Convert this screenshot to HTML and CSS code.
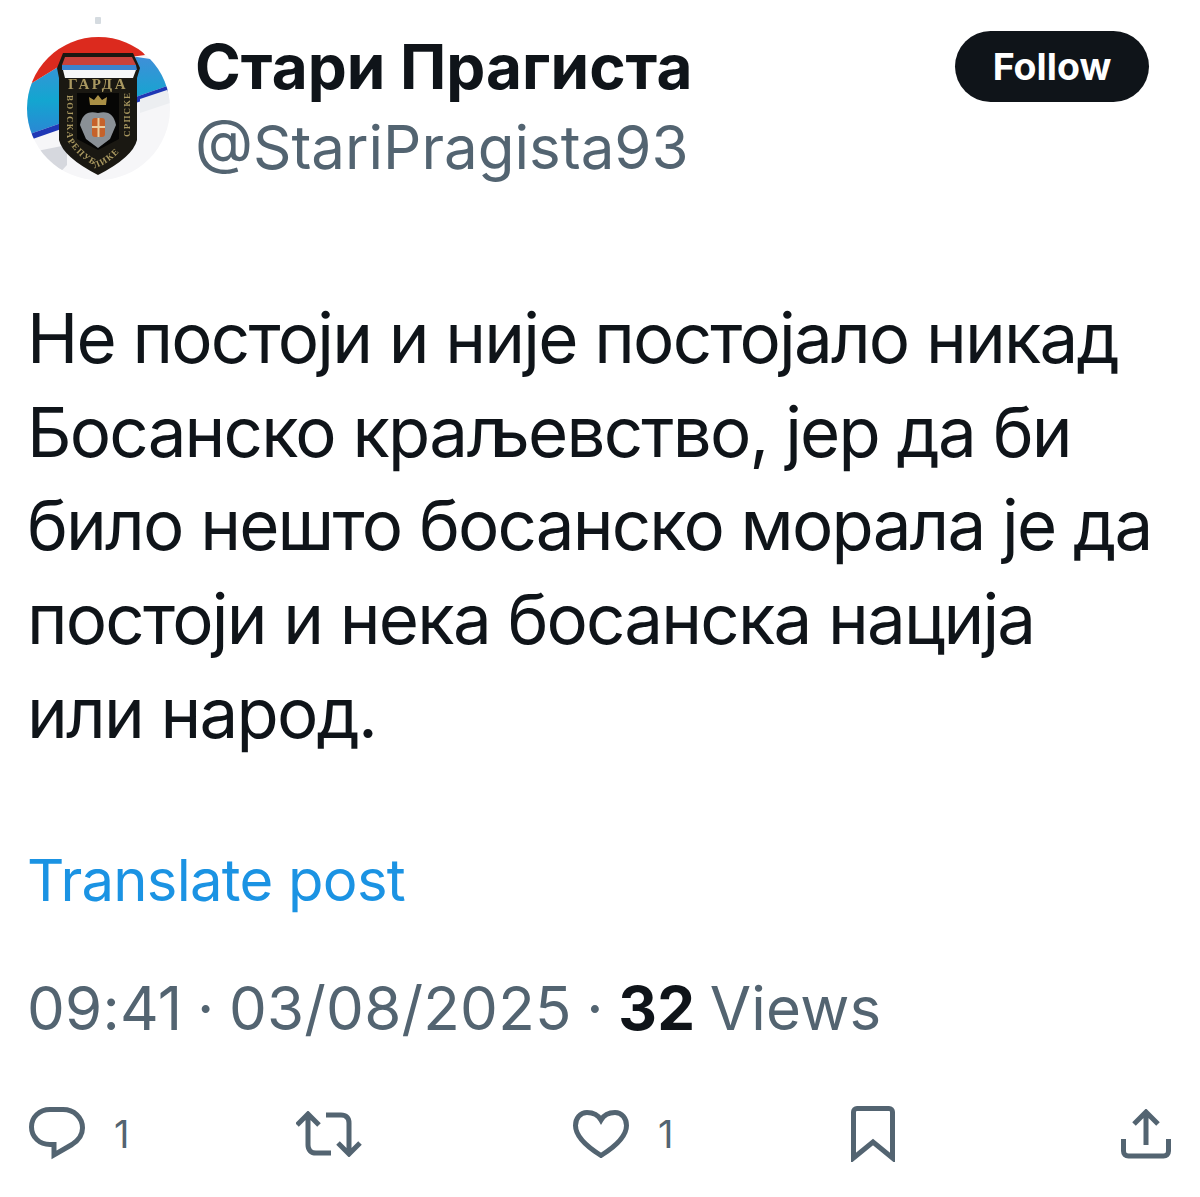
FILE: index.html
```html
<!DOCTYPE html>
<html lang="sr">
<head>
<meta charset="utf-8">
<title>Стари Прагиста</title>
<link rel="stylesheet" href="styles.css">
</head>
<body>
<main class="post">
  <span class="speck"></span>
  <header class="head">
    <svg class="avatar" viewBox="0 0 143 143" aria-hidden="true">
      <defs>
        <clipPath id="disc"><circle cx="71.500" cy="71.500" r="71.500"/></clipPath>
        <linearGradient id="blue" x1="0" y1="0" x2="0" y2="1">
          <stop offset="0" stop-color="#3f8fd8"/><stop offset=".55" stop-color="#13a6d0"/><stop offset="1" stop-color="#2b86d4"/>
        </linearGradient>
        <path id="arc" d="M40 103 Q52 122 71 130 Q90 122 103 101"/>
      </defs>
      <g clip-path="url(#disc)">
        <rect width="143" height="143" fill="#f6f6f8"/>
        <path d="M0 49 L31 30 L110 20 L143 25 V48 L0 98Z" fill="url(#blue)"/>
        <path d="M0 98 L143 48 V54 L0 104Z" fill="#1f37b5"/>
        <path d="M0 49 L31 30 L118 18 L100 -5 H0Z" fill="#dc2a1e"/>
        <path d="M0 116 L40 108 L40 128 L26 143 Z" fill="#d6d8de"/>
        <path d="M113 62 L143 52 V66 L113 76Z" fill="#eceef1"/>
      </g>
      <path d="M36 16 H106 L113 31 L110 41 V103 Q106 120 71 138 Q36 120 32 103 V41 L30 31Z" fill="#1a1812"/>
      <path d="M38 20 H105 L109 28 H35Z" fill="#c8423c"/>
      <path d="M35 28 H109 L110 33 H35Z" fill="#3a83cf"/>
      <path d="M36 33 H109 L106 41 H38Z" fill="#f6f7f8"/>
      <text class="crest" x="71" y="52" text-anchor="middle">ГАРДА</text>
      <path d="M50 56 H92 V102 L71 113 L50 102Z" fill="#060605"/>
      <path d="M63 68 L62 60 L67 63 L71 58 L75 63 L80 60 L79 68Z" fill="#a98f45"/>
      <path d="M53 88 Q56 72 71 76 Q86 72 89 88 L83 102 L71 111 L59 102Z" fill="#8a9096"/>
      <rect x="65" y="81" width="13" height="19" rx="3" fill="#c6622a"/>
      <path d="M71.500 81 V100 M65 90 H78" stroke="#ebcfa0" stroke-width="2"/>
      <text class="crest side" transform="translate(39.500 58) rotate(90)">ВОЈСКА</text>
      <text class="crest side" transform="translate(103 100) rotate(-90)">СРПСКЕ</text>
      <text class="crest side"><textPath href="#arc" startOffset="1">РЕПУБЛИКЕ</textPath></text>
    </svg>
    <div class="who">
      <div class="name">Стари Прагиста</div>
      <div class="handle">@StariPragista93</div>
    </div>
    <button class="follow">Follow</button>
  </header>

  <p class="body">Не постоји и није постојало никад<br>Босанско краљевство, јер да би<br>било нешто босанско морала је да<br>постоји и нека босанска нација<br>или народ.</p>

  <a class="translate">Translate post</a>

  <div class="meta">09:41 · 03/08/2025 · <b>32</b> Views</div>

  <footer class="actions">
    <div class="act">
      <svg class="ico ico-reply" viewBox="0 0 56 54" aria-hidden="true"><path d="M21 2.500H34C45 2.500 53.500 10.500 53.500 21C53.500 29 48.500 34 43 37.500L25 48V37.500H21C10.500 37.500 2.500 30 2.500 20C2.500 10 10.500 2.500 21 2.500Z"/></svg>
      <span class="count">1</span>
    </div>
    <svg class="ico ico-rt" viewBox="0 0 66 46" aria-hidden="true"><path d="M1 14L12 3L23 14M12 4V34C12 39 15 42 20 42H35M30 4H45C50 4 53 7 53 12V42M42 32L53 43L64 32"/></svg>
    <div class="act">
      <svg class="ico ico-heart" viewBox="0 0 56 48" aria-hidden="true"><path d="M28 10C24 3 18 2.500 14 2.500C7 2.500 2.500 8.500 2.500 15.500C2.500 27 16 38 28 45.500C40 38 53.500 27 53.500 15.500C53.500 8.500 49 2.500 42 2.500C38 2.500 32 3 28 10Z"/></svg>
      <span class="count">1</span>
    </div>
    <svg class="ico ico-mark" viewBox="0 0 44 56" aria-hidden="true"><path d="M2.500 52V6C2.500 4 4 2.500 6 2.500H38C40 2.500 41.500 4 41.500 6V52L22 36Z"/></svg>
    <svg class="ico ico-share" viewBox="0 0 50 50" aria-hidden="true"><path d="M25 36V3M13 15L25 3L37 15M2.500 30V42C2.500 45 4.500 47 7.500 47H42.500C45.500 47 47.500 45 47.500 42V30"/></svg>
  </footer>
</main>
</body>
</html>
```
FILE: styles.css
```css
* { box-sizing: border-box; }
html, body { margin: 0; background: #fff; }
body { font-family: Inter, "Liberation Sans", Arial, sans-serif; color: #0f1419; }
.post { position: relative; width: 1200px; height: 1197px; padding: 31px 51px 0 27px; display: flex; flex-direction: column; }
.speck { position: absolute; left: 95px; top: 17px; width: 6px; height: 7px; border-radius: 1px; background: #d5dbe0; }
.head { display: flex; align-items: flex-start; }
.avatar { width: 143px; height: 143px; margin-top: 6px; flex: none; filter: blur(.4px); }
.crest { font: 700 15px "Liberation Serif", serif; fill: #a99860; letter-spacing: 2.500px; }
.side { font-size: 9px; letter-spacing: 1.200px; }
.who { flex: 1; margin-left: 25px; }
.name { font-size: 62px; font-weight: 700; line-height: 72px; }
.handle { font-size: 60px; line-height: 88px; color: #536471; }
.follow { width: 194px; height: 71px; border: 0; border-radius: 36px; background: #0f1419; color: #fff; font: 700 37.500px Inter, sans-serif; padding: 0; }
.body { margin: 101px 0 0 0; font-size: 69px; line-height: 93.700px; letter-spacing: -1.800px; white-space: nowrap; }
.translate { margin: 84px 0 0 0; font-size: 58px; line-height: 70px; letter-spacing: -.750px; color: #1b93e3; }
.meta { margin: 58px 0 0 0; font-size: 60px; line-height: 70px; letter-spacing: .200px; word-spacing: -2.500px; color: #536471; }
.meta b { color: #0f1419; }
.actions { margin: 63px -21px 0 2px; display: grid; grid-template-columns: 267px 277px 278px 270px auto; align-items: center; }
.act { display: flex; align-items: center; gap: 29px; }
.count { font-size: 38px; color: #536471; line-height: 50px; }
.ico { display: block; fill: none; stroke: #536471; stroke-width: 5; }
.ico-reply { width: 56px; height: 54px; }
.ico-rt { width: 66px; height: 46px; }
.ico-heart { width: 56px; height: 48px; }
.ico-mark { width: 44px; height: 56px; }
.ico-share { width: 50px; height: 50px; }
```
